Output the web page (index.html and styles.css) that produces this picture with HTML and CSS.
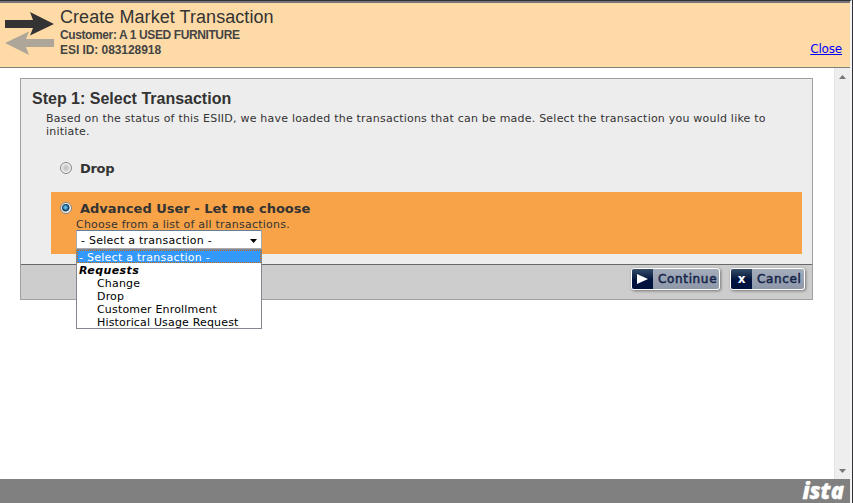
FILE: index.html
```html
<!DOCTYPE html>
<html lang="en">
<head>
<meta charset="utf-8">
<title>Create Market Transaction</title>
<link rel="stylesheet" href="styles.css">
</head>
<body>
<div class="window">
  <header class="header">
    <svg class="arrows" width="50" height="44" viewBox="0 0 50 44">
      <path fill="#333" d="M0 8H28L25 0L49 12L25 23.500L28 16H0Z"/>
      <path fill="#aea698" d="M0 31L24 19.500L21 27H49V35H21L24 43Z"/>
    </svg>
    <div class="heading">
      <h1>Create Market Transaction</h1>
      <p class="customer">Customer: A 1 USED FURNITURE</p>
      <p class="esi">ESI ID: 083128918</p>
    </div>
    <a class="close" href="#">Close</a>
  </header>
  <div class="body">
    <main class="content">
      <section class="panel">
        <div class="step">
          <h2>Step 1: Select Transaction</h2>
          <p class="intro">Based on the status of this ESIID, we have loaded the transactions that can be made. Select the transaction you would like to<br><span>initiate.</span></p>
          <div class="choice"><span class="radio"></span><span class="label drop">Drop</span></div>
          <div class="choice selected">
            <span class="radio on"></span>
            <div class="detail">
              <span class="label">Advanced User - Let me choose</span>
              <p class="hint">Choose from a list of all transactions.</p>
              <div class="select"><span>- Select a transaction -</span>
                <svg width="7" height="4" viewBox="0 0 7 4"><path d="M0 0H7L3.500 4Z"/></svg>
                <div class="menu">
                  <div class="item active">- Select a transaction -</div>
                  <div class="item group">Requests</div>
                  <div class="item sub">Change</div>
                  <div class="item sub">Drop</div>
                  <div class="item sub">Customer Enrollment</div>
                  <div class="item sub">Historical Usage Request</div>
                </div>
              </div>
            </div>
          </div>
        </div>
        <div class="actions">
          <div class="button continue"><span class="icon"><svg width="12" height="10" viewBox="0 0 12 10"><path fill="#fff" d="M0 0L11 5L0 10Z"/></svg></span><span class="text">Continue</span></div>
          <div class="button cancel"><span class="icon">x</span><span class="text">Cancel</span></div>
        </div>
      </section>
    </main>
    <div class="scrollbar">
      <svg width="7" height="4" viewBox="0 0 7 4"><path fill="#777" d="M0 4H7L3.500 0Z"/></svg>
      <svg width="7" height="4" viewBox="0 0 7 4"><path fill="#777" d="M0 0H7L3.500 4Z"/></svg>
    </div>
  </div>
  <footer class="footer"><span class="brand">ista</span></footer>
</div>
</body>
</html>
```

FILE: styles.css
```css
* { box-sizing: border-box; }
body { margin: 0; width: 853px; height: 503px; overflow: hidden; background: #303036; font: 11px/13px Verdana, "DejaVu Sans", sans-serif; color: #333; }
h1, h2, p { margin: 0; font-weight: normal; white-space: nowrap; }
.window { width: 852px; height: 503px; border-top: 1px solid #303036; border-right: 2px solid #f4f4f4; background: #fff; display: flex; flex-direction: column; }
.header { height: 67px; flex: none; display: flex; background: #fedba6; border-top: 2px solid #77747a; border-bottom: 1px solid #808080; padding-left: 5px; }
.arrows { margin-top: 9px; }
.heading { margin-left: 5px; padding-top: 4px; flex: 1; font-family: "Liberation Sans", sans-serif; }
h1 { font-size: 18px; line-height: 20px; letter-spacing: 0.06px; }
.customer, .esi { font-size: 12px; line-height: 15px; font-weight: bold; color: #444; }
.customer { letter-spacing: -0.39px; padding-top: 1px; }
.esi { letter-spacing: -0.06px; }
.close { color: #00f; align-self: flex-end; margin: 0 8px 11px 0; font-size: 12px; line-height: 14px; letter-spacing: -0.2px; }
.body { flex: 1; display: flex; }
.content { width: 834px; padding: 10px 21px 0 20px; }
.panel { height: 222px; border: 1px solid #a0a0a0; background: #ededed; display: flex; flex-direction: column; }
.step { height: 185px; padding: 10px 10px 0 11px; }
h2 { font: bold 16px/20px "Liberation Sans", sans-serif; }
.intro { margin: 3px 0 0 14px; letter-spacing: 0.216px; }
.choice { display: flex; margin: 22px 0 0 19px; padding: 0 0 0 9px; height: 17px; }
.choice.selected { margin-top: 15px; height: 62px; background: #f8a348; padding-top: 8px; }
.radio { flex: none; width: 12px; height: 12px; border: 1px solid #868686; border-radius: 50%; margin-top: 2px; background: radial-gradient(circle, #c4c8cb 0 20%, #e5e5e5 60%); box-shadow: inset 0 0 0 1px #f5f5f5; }
.radio.on { background: radial-gradient(circle at 45% 45%, #66c2e8 0 10%, #12466f 40%, #12364f 45%, #eee 58%); }
.label { display: block; font: bold 13px/17px Verdana, "DejaVu Sans", sans-serif; white-space: nowrap; }
.drop { margin-left: 8px; letter-spacing: -0.3px; }
.detail { margin-left: 4px; }
.detail .label { padding-left: 4px; }
.hint { padding-top: 1px; height: 13px; letter-spacing: 0.23px; }
.select { position: relative; width: 186px; height: 19px; background: #fff; border: 1px solid #a9a9af; border-top-color: #627f9c; color: #000; display: flex; align-items: center; justify-content: space-between; padding: 1px 4px 0; white-space: nowrap; letter-spacing: 0.26px; }
.select > svg { margin-top: 2px; }
.menu { position: absolute; left: -1px; top: 18px; width: 186px; height: 80px; background: #fff; border: 1px solid #828790; z-index: 2; }
.item { height: 13px; line-height: 15px; padding-left: 2px; white-space: nowrap; }
.active { background: #3399ff; color: #fff; outline: 1px dotted #cc6600; outline-offset: -1px; }
.group { font-weight: bold; font-style: italic; letter-spacing: 0.4px; }
.sub { padding-left: 20px; letter-spacing: 0.17px; }
.actions { flex: 1; border-top: 1px solid #686868; background: #cdcdcd; display: flex; justify-content: flex-end; gap: 10px; padding: 3px 7px 0; }
.button { height: 22px; border: 1px solid #fff; border-radius: 3px; display: flex; overflow: hidden; background: linear-gradient(#a5adbb, #8e98a9); box-shadow: 1px 1px 3px #777; color: #15254a; font: 12px/20px Verdana, "DejaVu Sans", sans-serif; }
.continue { width: 89px; }
.cancel { width: 75px; }
.icon { width: 21px; flex: none; display: flex; align-items: center; justify-content: center; color: #fff; font-weight: bold; background: linear-gradient(#344c69 0, #102447 40%, #00133f 55%); }
.text { padding-left: 5px; letter-spacing: 0.65px; -webkit-text-stroke: 0.5px #15254a; }
.scrollbar { width: 16px; background: #eee; border-left: 1px solid #e3e3e3; display: flex; flex-direction: column; align-items: center; justify-content: space-between; padding: 7px 0 6px; }
.footer { height: 24px; flex: none; background: #808080; display: flex; justify-content: flex-end; padding-right: 6px; }
.brand { font: italic 800 22px/22px "Open Sans", "DejaVu Sans", sans-serif; color: #fff; -webkit-text-stroke: 0.3px #fff; }
```
